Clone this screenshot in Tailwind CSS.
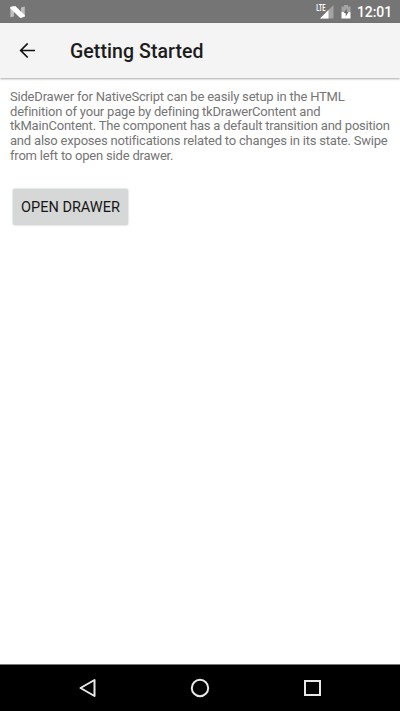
<!DOCTYPE html>
<html lang="en">
<head>
<meta charset="utf-8">
<title>Getting Started</title>
<script src="https://cdn.jsdelivr.net/npm/@tailwindcss/browser@4"></script>
</head>
<body class="h-[711px] w-[400px] overflow-hidden bg-white font-[Roboto,sans-serif]">
<div class="flex h-full flex-col">
  <div class="flex h-[23px] shrink-0 items-center bg-[#757575] pr-[8px] pl-[10px]">
    <svg class="mt-px h-[12px] w-[15px]" viewBox="0 0 15 12">
      <path d="M0.300 1 4 0v10.500L0.300 11.300zM11 1.500 14.800 .5v10L11 12z" fill="#bdbdbd"/>
      <path d="M0.300 1 5.300 0 14.800 9.300V10.500L10.300 12 .3 2.500z" fill="#fff"/>
    </svg>
    <div class="ml-auto flex items-center">
      <svg class="mt-px h-[16px] w-[18px]" viewBox="0 0 18 16">
        <path d="M17.500 1v13.500H4z" fill="#a3a3a3"/>
        <path d="M12.500 6v8.500H4z" fill="#fff"/>
        <path d="M0 0h9.800v7H0z" fill="#757575"/>
        <text x="0.300" y="6.500" font-family="Roboto" font-size="8.500" font-weight="700" fill="#fff" textLength="9.300" lengthAdjust="spacingAndGlyphs">LTE</text>
      </svg>
      <svg class="ml-[7px] h-[14px] w-[10px]" viewBox="0 0 10 14">
        <path d="M3 0h4v1.500h2.500V7H.5V1.500H3z" fill="#a3a3a3"/>
        <path d="M.5 7h9v6.500h-9z" fill="#fff"/>
        <path d="M5.800 3.500 2.800 8h1.900v3.500L7.500 7H5.800z" fill="#666"/>
      </svg>
      <span class="ml-[6px] w-[35px] pt-[2px] text-[14px] leading-[21px] font-medium tracking-[-0.100px] whitespace-nowrap text-white">12:01</span>
    </div>
  </div>
  <header class="relative flex h-[55px] shrink-0 items-center bg-[#f4f4f4] pl-[19px] shadow-[0_1px_2px_rgba(0,0,0,0.35)]">
    <svg class="h-[16px] w-[17px]" viewBox="0 0 17 16" fill="none" stroke="#111" stroke-width="1.700">
      <path d="M16 7.500H2M8.700 .5l-7 7 7 7"/>
    </svg>
    <h1 class="ml-[34px] pt-[2px] text-[19.500px] leading-6 font-medium tracking-[0.070px] whitespace-nowrap text-[#1c1c1c]">Getting Started</h1>
  </header>
  <main class="flex-1 pt-[12px] pl-[10px]">
    <p class="text-[13px] leading-[14.700px] tracking-[-0.200px] whitespace-nowrap text-[#757575]">SideDrawer for NativeScript can be easily setup in the HTML<br>definition of your page by defining tkDrawerContent and<br>tkMainContent. The component has a default transition and position<br>and also exposes notifications related to changes in its state. Swipe<br>from left to open side drawer.</p>
    <button class="mt-[25px] ml-[3px] block h-[36px] w-[115px] rounded-[2px] bg-[#d6d7d7] pt-[3px] text-[14.500px] whitespace-nowrap text-[#151515] shadow-[0_0_2px_rgba(0,0,0,0.3)]">OPEN DRAWER</button>
  </main>
  <nav class="flex h-[47px] shrink-0 items-center justify-between border-t border-[#777] bg-black pr-[79px] pl-[79px]">
    <svg class="h-[20px] w-[18px]" viewBox="0 0 18 20" fill="none" stroke="#e8e8e8" stroke-width="2" stroke-linejoin="round"><path d="M15.500 2v16L1.500 10z"/></svg>
    <svg class="h-[20px] w-[20px]" viewBox="0 0 20 20" fill="none" stroke="#e8e8e8" stroke-width="2"><circle cx="10" cy="10" r="8.200"/></svg>
    <svg class="h-[18px] w-[18px]" viewBox="0 0 18 18" fill="none" stroke="#e8e8e8" stroke-width="2"><path d="M2 2h15v14H2z"/></svg>
  </nav>
</div>
</body>
</html>
